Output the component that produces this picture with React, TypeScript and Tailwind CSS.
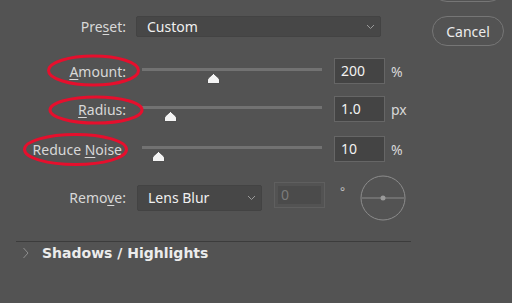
const font = { fontFamily: '"Noto Sans", "Open Sans", sans-serif' };

function Thumb() {
  return (
    <svg width="13" height="11" viewBox="0 0 13 11" className="absolute top-[15px]" style={{ marginLeft: -6 }}>
      <path d="M6.5 0.5 L11.5 5 Q12.5 6 12.5 7 L12.5 10.5 L0.5 10.5 L0.5 7 Q0.5 6 1.5 5 Z" fill="#f4f4f4" stroke="#3a3a3a" strokeWidth="0.8" />
    </svg>
  );
}

function SliderRow({ pre, under, rest, pos, value, unit, mt, pr }: { pre?: string; under: string; rest: string; pos: number; value: string; unit: string; mt: string; pr?: string }) {
  return (
    <div className={`flex items-center h-[26px] ${mt}`}>
      <div className={`w-[126px] text-right text-[14px] text-[#d8d8d8] whitespace-nowrap ${pr ?? ''}`}>
        {pre}
        <span className="underline underline-offset-2">{under}</span>
        {rest}
      </div>
      <div className="relative ml-[16px] w-[180px] h-[26px]">
        <div className="absolute left-0 right-0 top-[10px] h-[3px] bg-[#727272]" />
        <div className="absolute top-0" style={{ left: pos }}>
          <Thumb />
        </div>
      </div>
      <div className="ml-[12px] w-[51px] h-[26px] border border-[#666] bg-[#444] text-[14px] text-[#f2f2f2] pl-[6px] leading-[24px]">
        {value}
      </div>
      <div className="ml-[6px] text-[14px] text-[#d8d8d8]">{unit}</div>
    </div>
  );
}

function Chevron() {
  return (
    <svg width="9" height="6" viewBox="0 0 9 6">
      <path d="M1 1 L4.5 4.5 L8 1" fill="none" stroke="#9a9a9a" strokeWidth="1" />
    </svg>
  );
}

export default function App() {
  return (
    <div className="relative w-[512px] h-[303px] bg-[#535353] overflow-hidden flex" style={font}>
      <div className="w-[432px] pt-[16px]">
        <div className="flex items-center h-[21px]">
          <div className="w-[126px] text-right text-[14px] text-[#d8d8d8]">
            Pre<span className="underline underline-offset-2">s</span>et:
          </div>
          <div className="ml-[10px] w-[245px] h-[21px] rounded-[2px] border border-[#434343] bg-[#474747] flex items-center justify-between pl-[10px] pr-[5px]">
            <span className="text-[14px] text-[#f0f0f0]">Custom</span>
            <Chevron />
          </div>
        </div>

        <SliderRow under="A" rest="mount:" pos={71} value="200" unit="%" mt="mt-[21px]" />
        <SliderRow under="R" rest="adius:" pos={28} value="1.0" unit="px" mt="mt-[12px]" />
        <SliderRow pre="Reduce " under="N" rest="oise" pos={16} value="10" unit="%" mt="mt-[14px]" pr="pr-[4px]" />

        <div className="flex items-center h-[45px] mt-[13px]">
          <div className="w-[126px] text-right text-[14px] text-[#d8d8d8]">
            Remo<span className="underline underline-offset-2">v</span>e:
          </div>
          <div className="ml-[11px] w-[125px] h-[26px] rounded-[2px] border border-[#434343] bg-[#474747] flex items-center justify-between pl-[10px] pr-[5px]">
            <span className="text-[14px] text-[#f0f0f0]">Lens Blur</span>
            <Chevron />
          </div>
          <div className="ml-[12px] mb-[6px] w-[51px] h-[26px] border border-[#5f5f5f] p-[3px]">
            <div className="w-full h-full bg-[#4b4b4b] text-[14px] text-[#7c7c7c] pl-[3px] leading-[18px]">0</div>
          </div>
          <div className="ml-[15px] mb-[12px] w-[20px] text-[12px] text-[#bdbdbd]">°</div>
          <svg width="46" height="46" viewBox="0 0 46 46">
            <circle cx="23" cy="23" r="22" fill="none" stroke="#8c8c8c" strokeWidth="1" />
            <line x1="2" y1="23" x2="44" y2="23" stroke="#8c8c8c" strokeWidth="1" />
            <circle cx="23" cy="23" r="2.5" fill="#9a9a9a" />
          </svg>
        </div>

        <div className="mt-[21px] ml-[16px] w-[395px] border-t border-[#3c3c3c]" />
        <div className="flex items-center h-[20px] mt-[1px]">
          <svg width="8" height="12" viewBox="0 0 8 12" className="ml-[22px]">
            <path d="M1.5 1 L6 6 L1.5 11" fill="none" stroke="#8e8e8e" strokeWidth="1" />
          </svg>
          <span
            className="ml-[12px] text-[14px] font-bold text-[#ececec]"
            style={{ fontFamily: '"DejaVu Sans", Verdana, sans-serif' }}
          >
            Shadows / Highlights
          </span>
        </div>
      </div>

      <div className="w-[72px] flex flex-col">
        <div className="-mt-[28px] h-[30px] rounded-full border border-[#767676]" />
        <div className="mt-[14px] h-[30px] rounded-full border border-[#767676] flex items-center justify-center text-[14px] text-[#ececec]">
          Cancel
        </div>
      </div>

      <svg className="absolute inset-0 pointer-events-none" width="512" height="303">
        <ellipse cx="93.5" cy="70.5" rx="45" ry="14.5" fill="none" stroke="#e60f2d" strokeWidth="3" />
        <ellipse cx="96" cy="110" rx="46" ry="13" fill="none" stroke="#e60f2d" strokeWidth="3" />
        <ellipse cx="75.5" cy="149.5" rx="51" ry="15" fill="none" stroke="#e60f2d" strokeWidth="3" />
      </svg>
    </div>
  );
}
